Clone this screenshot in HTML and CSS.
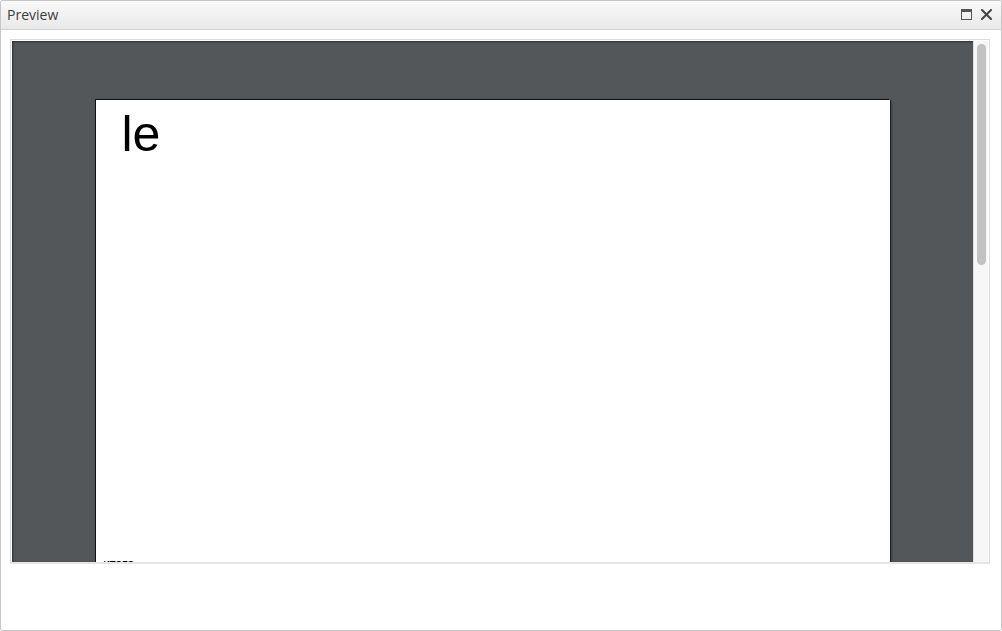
FILE: index.html
```html
<!DOCTYPE html>
<html lang="en">
<head>
  <meta charset="UTF-8" />
  <title>Preview</title>
  <link rel="stylesheet" href="styles.css">
</head>
<body>
  <div class="window">
    <div class="titlebar">
      <span class="title">Preview</span>
      <div class="tools">
        <svg class="tool" width="11" height="11" viewBox="0 0 11 11">
          <rect x="0.5" y="0.5" width="10" height="10" fill="none" stroke="#555" stroke-width="1"/>
          <rect x="0" y="0" width="11" height="3" fill="#555"/>
        </svg>
        <svg class="tool" width="11" height="11" viewBox="0 0 11 11">
          <path d="M1 1 L10 10 M10 1 L1 10" stroke="#444" stroke-width="2" stroke-linecap="square"/>
        </svg>
      </div>
    </div>

    <div class="content">
      <div class="frame">
        <div class="viewer">
          <div class="page">
            <div class="heading">le</div>
            <div class="footer-text">итого</div>
          </div>
        </div>
        <div class="scrollbar">
          <div class="thumb"></div>
        </div>
      </div>
    </div>
  </div>
</body>
</html>
```

FILE: styles.css
```css
body {
  margin: 0;
  font-family: "Open Sans", sans-serif;
  background: #fff;
}

.window {
  width: 1002px;
  height: 631px;
  box-sizing: border-box;
  border: 1px solid #c6c6c6;
  border-radius: 2px;
  background: #fff;
}

.titlebar {
  height: 28px;
  display: flex;
  align-items: center;
  justify-content: space-between;
  padding: 0 9px 0 6px;
  background: linear-gradient(#f9f9f9, #e9e9e9);
  border-bottom: 1px solid #d2d2d2;
}

.title {
  font-size: 14px;
  color: #3c3c3c;
  margin-top: -1px;
}

.tools {
  display: flex;
  gap: 9px;
  margin-top: -1px;
}

.content {
  padding: 9px 11px 0 9px;
}

.frame {
  display: flex;
  height: 521px;
  border: 1px solid #dcdcdc;
  border-bottom: 2px solid #e6e6e6;
  padding: 1px 1px 0 1px;
  background: #fff;
}

.viewer {
  flex: 1;
  overflow: hidden;
  background: #53575a;
  box-shadow: inset 1px 1px 2px rgba(0, 0, 0, 0.45);
}

.scrollbar {
  width: 15px;
  box-sizing: border-box;
  background: #f7f7f7;
  border-left: 1px solid #e0e0e0;
  padding: 3px 2px 0 3px;
}

.thumb {
  height: 221px;
  background: #c2c2c2;
  border-radius: 5px;
}

.page {
  width: 794px;
  height: 1123px;
  margin: 59px auto;
  box-sizing: border-box;
  background: #fff;
  box-shadow: -1px -1px 0 #111, 1px 0 0 #222, 1px 1px 3px rgba(0, 0, 0, 0.5);
  padding: 10px 26px;
  font-family: "Liberation Sans", Arial, sans-serif;
  color: #000;
}

.heading {
  font-size: 50px;
  line-height: 48px;
}

.footer-text {
  margin-top: 401px;
  margin-left: -18px;
  font-size: 9px;
  font-weight: bold;
  text-transform: uppercase;
}
```
